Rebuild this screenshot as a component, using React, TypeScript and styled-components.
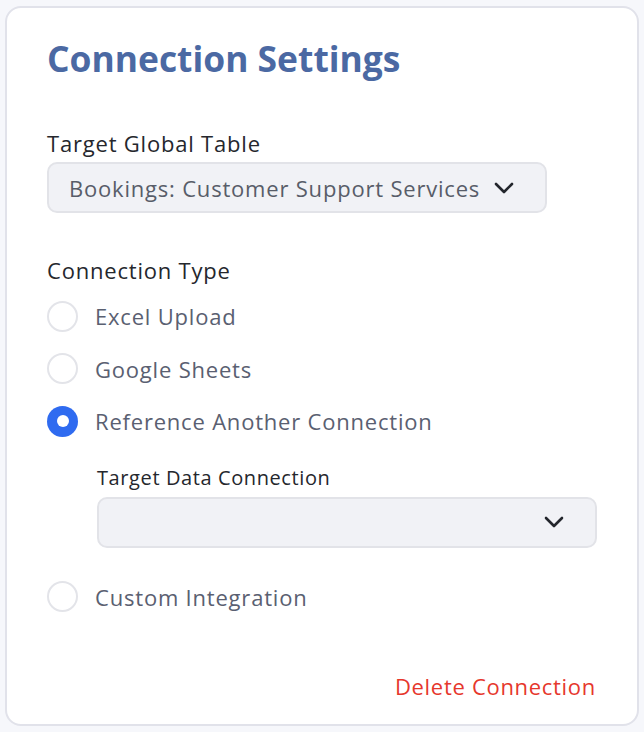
import React from "react";
import styled, { createGlobalStyle } from "styled-components";

const Global = createGlobalStyle`
  html, body { margin: 0; padding: 0; background: #f6f7fb; }
  body { font-family: "Open Sans", "Noto Sans", sans-serif; }
  * { box-sizing: border-box; }
`;

const Page = styled.div`
  padding: 6px 5px 6px 5px;
`;

const Card = styled.div`
  background: #ffffff;
  border: 2px solid #e1e2ea;
  border-radius: 16px;
  height: 720px;
  padding: 26px 40px 0 40px;
  display: flex;
  flex-direction: column;
`;

const Title = styled.h1`
  margin: 0;
  font-size: 35.4px;
  font-weight: 700;
  color: #4b69a3;
  line-height: 48px;
`;

const Label = styled.div<{ $small?: boolean }>`
  font-size: ${(p) => (p.$small ? "20px" : "22px")};
  letter-spacing: ${(p) => (p.$small ? "0.6px" : "0.8px")};
  color: #25272d;
  line-height: 26px;
`;

const Select = styled.div<{ $width: number }>`
  width: ${(p) => p.$width}px;
  height: 51px;
  background: #f1f2f6;
  border: 2px solid #e2e3e8;
  border-radius: 10px;
  display: flex;
  align-items: center;
  padding: 0 31px 0 20px;
  gap: 12px;
  margin-top: 6px;
`;

const SelectText = styled.span`
  font-size: 22px;
  letter-spacing: 0.8px;
  color: #585d69;
  white-space: nowrap;
`;

const Chevron = styled.svg`
  margin-left: auto;
  flex: none;
`;

const Section = styled.div<{ $mt: number }>`
  margin-top: ${(p) => p.$mt}px;
  display: flex;
  flex-direction: column;
`;

const RadioList = styled.div`
  margin-top: 7px;
  display: flex;
  flex-direction: column;
`;

const RadioRow = styled.div`
  display: flex;
  align-items: center;
  gap: 17px;
  height: 52.5px;
`;

const Circle = styled.span<{ $on?: boolean }>`
  width: 31px;
  height: 31px;
  border-radius: 50%;
  flex: none;
  border: ${(p) => (p.$on ? "none" : "2px solid #e3e4e9")};
  background: ${(p) => (p.$on ? "#2f6bf0" : "#fff")};
  display: flex;
  align-items: center;
  justify-content: center;
  &::after {
    content: "";
    display: ${(p) => (p.$on ? "block" : "none")};
    width: 12px;
    height: 12px;
    border-radius: 50%;
    background: #fff;
  }
`;

const RadioText = styled.span`
  font-size: 22px;
  letter-spacing: 0.8px;
  color: #5a6071;
`;

const Nested = styled.div`
  padding-left: 50px;
  display: flex;
  flex-direction: column;
  padding-top: 17px;
  padding-bottom: 23px;
`;

const Footer = styled.div`
  margin-top: 48px;
  display: flex;
  justify-content: flex-end;
  padding-right: 1px;
`;

const Delete = styled.span`
  font-size: 22px;
  letter-spacing: 0.7px;
  color: #e6372c;
`;

const ChevronIcon = () => (
  <Chevron width="20" height="12" viewBox="0 0 20 12">
    <path d="M2 2 L10 10 L18 2" fill="none" stroke="#23262c" strokeWidth="2.6" strokeLinecap="round" strokeLinejoin="round" />
  </Chevron>
);

const Radio = ({ label, on }: { label: string; on?: boolean }) => (
  <RadioRow>
    <Circle $on={on} />
    <RadioText>{label}</RadioText>
  </RadioRow>
);

export default function App() {
  return (
    <>
      <Global />
      <Page>
        <Card>
          <Title>Connection Settings</Title>
          <Section $mt={48}>
            <Label>Target Global Table</Label>
            <Select $width={500}>
              <SelectText>Bookings: Customer Support Services</SelectText>
              <ChevronIcon />
            </Select>
          </Section>
          <Section $mt={44}>
            <Label>Connection Type</Label>
            <RadioList>
              <Radio label="Excel Upload" />
              <Radio label="Google Sheets" />
              <Radio label="Reference Another Connection" on />
              <Nested>
                <Label $small>Target Data Connection</Label>
                <Select $width={500}>
                  <ChevronIcon />
                </Select>
              </Nested>
              <Radio label="Custom Integration" />
            </RadioList>
          </Section>
          <Footer>
            <Delete>Delete Connection</Delete>
          </Footer>
        </Card>
      </Page>
    </>
  );
}
